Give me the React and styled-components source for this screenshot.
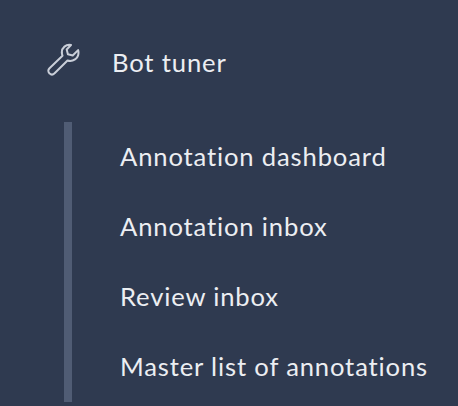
import styled, { createGlobalStyle } from "styled-components";

const Global = createGlobalStyle`
	html, body {
		margin: 0;
		padding: 0;
		background: #2f3a50;
	}
`;

const Sidebar = styled.nav`
	width: 458px;
	height: 406px;
	background: #2f3a50;
	font-family: Lato, sans-serif;
	color: #eceef2;
	overflow: hidden;
	box-sizing: border-box;
	padding-top: 40px;
`;

const Header = styled.div`
	display: flex;
	align-items: center;
	height: 44px;
	padding-left: 46px;
`;

const IconWrap = styled.span`
	display: flex;
	width: 36px;
	height: 36px;
	margin: 0 31px 6px 0;
	color: #c9ced8;
`;

const Title = styled.span`
	font-size: 25.6px;
	letter-spacing: 0.85px;
	margin-left: -1px;
`;

const SubMenu = styled.ul`
	list-style: none;
	margin: 38px 0 0 64px;
	padding: 0 0 0 48px;
	border-left: 8px solid #505c74;
	height: 280px;
	box-sizing: border-box;
`;

const Item = styled.li`
	height: 70px;
	box-sizing: border-box;
	padding-bottom: 2px;
	display: flex;
	align-items: center;
	font-size: 25.6px;
	letter-spacing: 0.85px;
	white-space: nowrap;
`;

const items = [
	"Annotation dashboard",
	"Annotation inbox",
	"Review inbox",
	"Master list of annotations",
];

function App() {
	return (
		<>
			<Global />
			<Sidebar>
				<Header>
					<IconWrap>
						<svg width="36" height="36" viewBox="0 0 36 36" fill="none" stroke="currentColor" strokeWidth="2" strokeLinecap="round" strokeLinejoin="round">
							<path d="M25 4c-5-1-9.400 2.800-9.200 7.700.1 1.100.3 2.100.7 3L3.500 27.200c-1.600 1.500-1.600 3.800 0 5.200 1.400 1.400 3.600 1.400 5.100-.1L21.500 19.500c5.300 1.800 11-2.100 11-7.800 0-.9-.1-1.800-.4-2.600l-5.400 5.400-4.800-1.200-1.200-4.800z" />
						</svg>
					</IconWrap>
					<Title>Bot tuner</Title>
				</Header>
				<SubMenu>
					{items.map((item) => (
						<Item key={item}>{item}</Item>
					))}
				</SubMenu>
			</Sidebar>
		</>
	);
}

export default App;
